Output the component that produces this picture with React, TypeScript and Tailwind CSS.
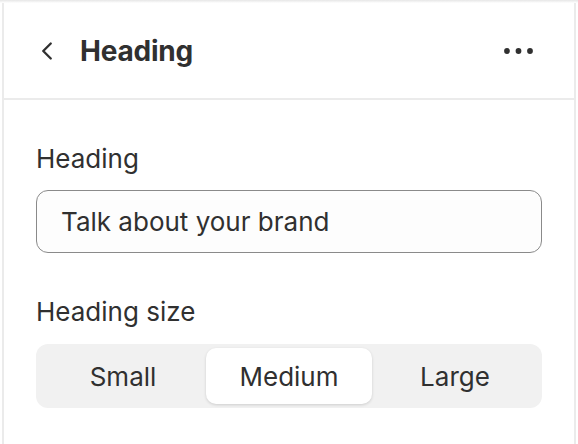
import { ChevronLeft } from 'lucide-react';

const SIZES = ['Small', 'Medium', 'Large'];

export default function App() {
  return (
    <div className="w-[578px] h-[444px] bg-white overflow-hidden text-[#303030]" style={{ fontFamily: 'Inter, "Noto Sans", sans-serif' }}>
      <div className="h-[3px] bg-gradient-to-b from-[#e6e6e6] to-white" />
      <div className="ml-[2px] mr-[2px] h-[441px] border-x-2 border-[#ebebeb]">
        {/* header */}
        <div className="h-[97px] flex items-center pl-[32px] pr-[40px] border-b-2 border-[#ebebeb]">
          <ChevronLeft size={30} strokeWidth={1.9} className="text-[#303030] -ml-[4px]" />
          <h1 className="ml-[18px] text-[28px] font-bold tracking-[-0.2px]">Heading</h1>
          <svg className="ml-auto" width="31" height="8" viewBox="0 0 31 8" fill="#303030">
            <circle cx="4" cy="4" r="2.9" />
            <circle cx="15.5" cy="4" r="2.9" />
            <circle cx="27" cy="4" r="2.9" />
          </svg>
        </div>

        <div className="px-[32px] pt-[43px]">
          <label className="block text-[26px] leading-[32px]">Heading</label>
          <div className="mt-[15px] h-[63px] rounded-[12px] border border-[#8a8a8a] bg-[#fdfdfd] flex items-center px-[24px] text-[26px]">
            Talk about your brand
          </div>

          <div className="mt-[43px] text-[26px] leading-[32px]">Heading size</div>
          <div className="mt-[16px] h-[64px] rounded-[12px] bg-[#f1f1f1] p-[4px] grid grid-cols-3">
            {SIZES.map((s) => (
              <div
                key={s}
                className={
                  s === 'Medium'
                    ? 'flex items-center justify-center rounded-[10px] bg-white shadow-[0_1px_3px_rgba(0,0,0,0.15)] text-[26px]'
                    : 'flex items-center justify-center text-[26px]'
                }
              >
                {s}
              </div>
            ))}
          </div>
        </div>
      </div>
    </div>
  );
}
